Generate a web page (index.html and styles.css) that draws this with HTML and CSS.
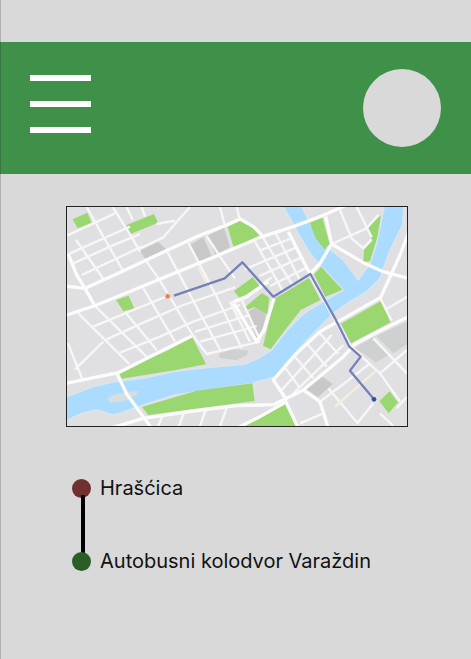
FILE: index.html
```html
<!DOCTYPE html>
<html lang="hr">
<head>
<meta charset="utf-8">
<meta name="viewport" content="width=device-width, initial-scale=1">
<title>Hrašćica – Autobusni kolodvor Varaždin</title>
<link rel="stylesheet" href="styles.css">
</head>
<body>
<header class="topbar">
  <button class="menu" type="button" aria-label="Izbornik">
    <span class="menu-bar"></span>
    <span class="menu-bar"></span>
    <span class="menu-bar"></span>
  </button>
  <button class="avatar" type="button" aria-label="Profil"></button>
</header>
<main class="content">
  <svg class="map" viewBox="21 21 1020 657" preserveAspectRatio="none" role="img" aria-label="Karta rute">
    <defs>
      <filter id="soften" x="0" y="0" width="1" height="1">
        <feGaussianBlur stdDeviation="2"/>
      </filter>
    </defs>
    <g filter="url(#soften)">
    <rect class="land" x="-20" y="-20" width="1110" height="740"/>
    <!-- built-up blocks -->
    <g class="block">
      <path d="M240 152L294 126L318 147L255 176Z"/>
      <path d="M390 134L430 112L455 168L412 186ZM442 108L492 83L510 142L466 164Z"/>
      <path d="M560 340L590 318L618 345L600 420L590 415Z"/>
      <path class="faint" d="M475 462L520 448L565 452L560 466L530 480L480 475Z"/>
      <path d="M738 566L788 530L818 552L774 592Z"/>
      <path class="faint" d="M885 443L942 410L990 464L947 487ZM948 408L1041 365V432L1000 460Z"/>
    </g>
    <!-- river -->
    <path class="water" d="M10 594L100 560L165 545L250 535L345 514L450 502L555 493L595 475L635 450L670 405L705 365L740 335L790 305L850 270L785 200L750 160L720 110L690 55L665 10H720L755 80L800 140L850 180L895 240L930 190L950 130L975 10H1032L1028 75L990 150L960 235L920 275L870 305L820 340L765 395L690 475L645 530L575 550L345 585L250 615L185 638L160 645L110 630L70 638L10 666Z"/>
    <path class="island" d="M142 594L170 581L232 573L230 585L190 605L150 608Z"/>
    <!-- parks -->
    <g class="park">
      <path d="M38 58L82 38L95 68L53 85Z"/>
      <path d="M198 76L282 42L294 68L212 102Z"/>
      <path d="M168 300L206 287L223 325L190 334Z"/>
      <path d="M503 80L543 61L582 82L605 109L520 140Z"/>
      <path d="M522 273L578 232L598 257L541 297Z"/>
      <path d="M553 323L606 279L628 293L622 344L584 320L556 332Z"/>
      <path d="M644 296L747 234L781 300L722 330L678 386L632 448L609 437Z"/>
      <path d="M749 68L787 52L809 132L793 148L768 116Z"/>
      <path d="M922 82L963 46L953 108L930 184L910 186L912 148L936 122Z"/>
      <path d="M762 223L784 200L847 269L796 290Z"/>
      <path d="M843 371L962 304L992 367L873 430Z"/>
      <path d="M178 521L250 482L320 453L397 412L438 493L343 511L185 536Z"/>
      <path d="M246 621L410 572L577 550L584 603L430 623L265 645Z"/>
      <path d="M545 685L608 645L675 609L715 685Z"/>
      <path d="M958 604L989 574L1014 607L986 640Z"/>
    </g>
    <!-- side streets, west bank -->
    <g class="street">
      <path d="M21 107L165 40M30 160L120 120L210 80M40 190L150 140L240 102M65 225L160 180L245 140"/>
      <path d="M48 120L130 237M80 21L130 110L188 210M158 21L205 95L240 155M200 21L218 60M245 21L255 50"/>
      <path d="M390 21L355 60L310 112L240 145M290 72L345 62M480 21L495 80M530 21L538 55"/>
      <path d="M255 178L300 242L398 405M320 152L355 218L420 340L482 452M385 128L420 195L480 310L545 445M440 108L477 165L525 235"/>
      <path d="M55 340L208 492M105 318L265 475M195 335L290 450M250 265L345 425"/>
      <path d="M100 380L220 330L330 285M140 418L250 368L370 315L525 262M180 458L300 410L400 365L540 315M420 425L590 378M405 395L570 345"/>
      <path d="M398 405L440 462L600 425M510 305L570 425M545 300L600 420M510 310L565 290M600 257L635 232"/>
      <path d="M24 430L68 540M45 508L130 425"/>
      <path d="M310 640L295 678M372 637L357 678M437 630L420 678M500 625L480 678"/>
    </g>
    <!-- side streets, east of the park -->
    <g class="street">
      <path d="M605 105L640 165L700 258M585 125L668 272M645 95L720 240M598 152L690 117M555 208L710 142M598 228L725 172M630 258L740 203"/>
      <path d="M840 30L875 115L910 145L935 118M890 21L935 112M815 132L920 85L955 45"/>
      <path d="M675 503L717 560M705 470L760 535M740 430L800 500M775 395L835 462M665 570L815 405M700 580L850 435"/>
      <path d="M805 565L895 672M780 605L860 545L930 490M905 470L960 520L1020 605M940 415L1041 520M890 672L940 610M960 520L1041 450M720 670L790 640M960 640L1000 678M1010 625L1041 590M975 330L1041 290M960 292L995 362"/>
      <path class="lane" d="M825 620L950 510M415 200L440 250"/>
    </g>
    <!-- main roads -->
    <g class="road">
      <path d="M10 258L75 265L170 222L345 140L410 110L500 75L540 57L580 80L605 105"/>
      <path d="M10 349L110 315L250 258L355 215L470 168L600 112L700 80L780 50L860 15"/>
      <path d="M24 160L50 225L75 265L105 318"/>
      <path d="M10 552L90 535L175 518L270 470L340 435L395 408"/>
      <path d="M522 305L560 290L625 245M522 310L590 425L612 390L642 296M685 95L750 222L780 190L815 132L797 50M815 132L910 188L970 215L1045 235"/>
      <path d="M750 222L870 440L905 470"/>
      <path d="M170 520L185 550L200 582L235 630L275 685"/>
      <path d="M150 685L250 655L400 633L530 617L640 614L730 570L850 470L885 432L960 392L1045 350"/>
      <path d="M1045 100L1020 165L962 292L860 350L780 395L710 460L640 540L680 600"/>
      <path d="M675 600L715 685M730 570L780 605L805 685M530 685L600 650L680 605"/>
    </g>
    <path class="route-line" d="M342 287L494 235L547 187L640 290L751 222L825 355L868 440L902 470L870 512L942 598"/>
    <circle class="route-start" cx="323" cy="289" r="8"/>
    <circle class="route-end" cx="942" cy="598" r="7"/>
    </g>
  </svg>
  <ol class="stops">
    <li class="stop stop-from">Hrašćica</li>
    <li class="stop stop-to">Autobusni kolodvor Varaždin</li>
  </ol>
</main>
</body>
</html>
```

FILE: styles.css
```css
* {
  box-sizing: border-box;
}

body {
  margin: 0;
  min-height: 100vh;
  padding-top: 42px;
  background: #d9d9d9;
  box-shadow: inset 1px 0 0 #b0b0b0;
  color: #111;
  font-family: Inter, "Liberation Sans", sans-serif;
  font-size: 20px;
  line-height: 24px;
}

.topbar {
  display: flex;
  align-items: center;
  justify-content: space-between;
  min-height: 132px;
  padding: 0 30px;
  background: #3f9049;
  box-shadow: inset 1px 0 0 #3a7742;
}

.menu {
  display: flex;
  flex-direction: column;
  gap: 20px;
  padding: 0 0 8px;
  border: 0;
  background: none;
}

.menu-bar {
  width: 61px;
  height: 6px;
  background: #fff;
}

.avatar {
  width: 78px;
  height: 78px;
  padding: 0;
  border: 0;
  border-radius: 50%;
  background: #d9d9d9;
}

.content {
  padding: 32px 63px 32px 66px;
}

.map {
  display: block;
  width: 100%;
  height: auto;
  border: 1px solid #222;
}

.land {
  fill: #e0e0e2;
}

.block {
  fill: #c8c8c9;
}

.faint {
  fill: #cfd0d0;
}

.water {
  fill: #abdcff;
  stroke: #d9e6ec;
  stroke-width: 4;
}

.island {
  fill: #d7dde1;
}

.park {
  fill: #9bd76f;
}

.street,
.road {
  fill: none;
  stroke: #f7f7f8;
  stroke-width: 7;
  stroke-linejoin: round;
}

.street .lane {
  stroke: #f1eee0;
}

.road {
  stroke: #fcfcfc;
  stroke-width: 10;
}

.route-line {
  fill: none;
  stroke: #7580b8;
  stroke-width: 7;
  stroke-linejoin: round;
}

.route-start {
  fill: #ee7f45;
  stroke: #f6d5c4;
  stroke-width: 3;
}

.route-end {
  fill: #3450a2;
}

.stops {
  display: grid;
  gap: 49px;
  margin: 0;
  padding: 49px 0 0 6px;
  list-style: none;
}

.stop {
  position: relative;
  display: flex;
  align-items: center;
  gap: 9px;
}

.stop::before {
  flex: none;
  width: 19px;
  height: 19px;
  border-radius: 50%;
  content: "";
}

.stop-from::before {
  background: #722f30;
}

.stop-to::before {
  background: #2c5d27;
}

/* connector between the two stops */
.stop-from::after {
  position: absolute;
  top: 19px;
  left: 9px;
  width: 4px;
  height: 58px;
  background: #000;
  content: "";
}
```
